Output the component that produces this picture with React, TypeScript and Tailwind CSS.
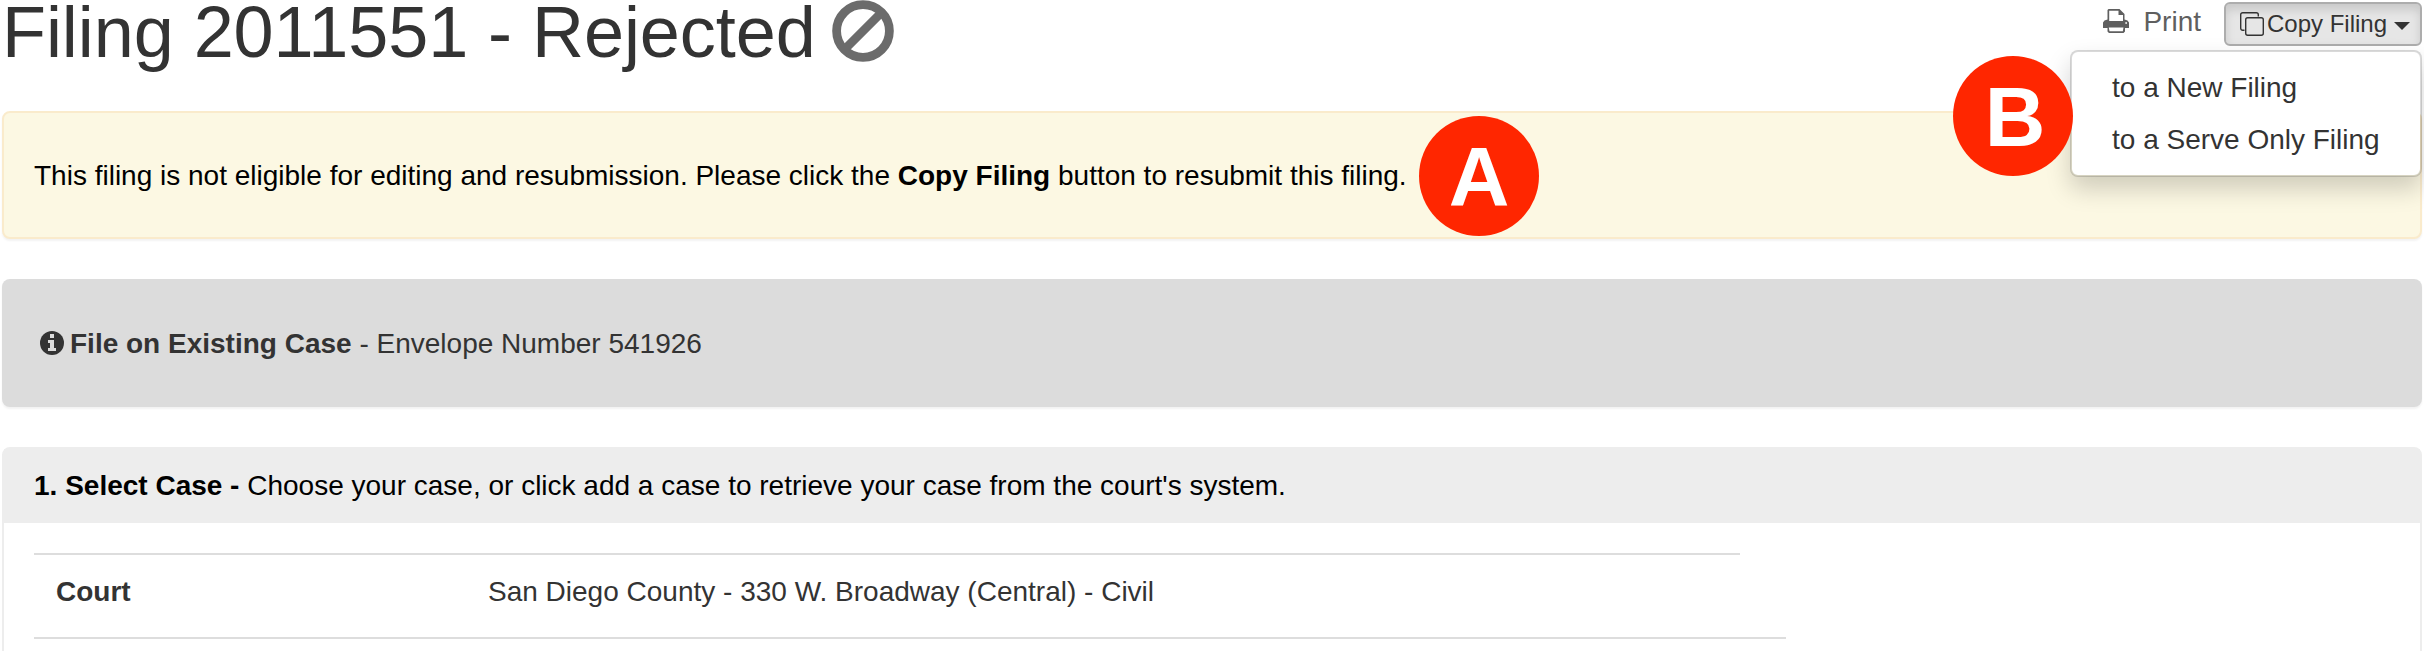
import { useState } from 'react'

const menuItems = ['to a New Filing', 'to a Serve Only Filing']

const BanIcon = () => (
  <svg className="w-[62px] h-[62px] text-[#6b6b6b]" viewBox="0 0 62 62" fill="none" stroke="currentColor" strokeWidth={8.8}>
    <circle cx="31" cy="31" r="26.4" />
    <path d="M14 48L48 14" />
  </svg>
)

const PrintIcon = () => (
  <svg className="w-[26px] h-6" viewBox="0 0 26 24" fill="currentColor">
    <path
      fillRule="evenodd"
      d="M5.500 0H16.500L21.500 5V10.500L24.500 11.500L26 13.500V19H22V22.500L20.500 24H6L4.500 22.500V19H0V13.500L1.500 11.500L4.500 10.500V1ZM6.200 1.700V12H20V6H15.500V1.700ZM5.800 18.500L6.500 22.300H19.800L20.500 18.500ZM22.300 13.300V14.800H24V13.300Z"
    />
  </svg>
)

const CopyIcon = () => (
  <svg className="w-6 h-6" viewBox="0 0 24 24" fill="none" stroke="currentColor" strokeWidth={1.4}>
    <rect x="5.7" y="5.7" width="17.6" height="17.6" rx="2" />
    <path d="M4.5 18.3H2.7a2 2 0 0 1-2-2V2.7a2 2 0 0 1 2-2h13.600a2 2 0 0 1 2 2v1.800" />
  </svg>
)

const InfoIcon = () => (
  <svg className="w-6 h-6" viewBox="0 0 24 24">
    <circle cx="12" cy="12" r="12" fill="#333" />
    <path fill="#dcdcdc" d="M10 3h4v4h-4zM8 9h6v8h2v3H8v-3h2v-5H8z" />
  </svg>
)

function Marker({ label, className }: { label: string; className: string }) {
  return (
    <span
      className={`absolute z-20 flex h-[120px] w-[120px] items-center justify-center rounded-full bg-[#ff2600] pt-0.5 text-[84px] font-bold leading-none text-white ${className}`}
    >
      {label}
    </span>
  )
}

export default function App() {
  const [isMenuOpen, setIsMenuOpen] = useState(true)

  return (
    <div className="h-[651px] overflow-hidden bg-white px-0.5 font-['Liberation_Sans',Arial,sans-serif] text-[28px] leading-10 text-[#333]">
      {/* Title bar */}
      <header className="flex h-[111px] items-start justify-between">
        <div className="flex items-start">
          <h1 className="text-[72px] leading-[64px] tracking-[-0.06px] whitespace-nowrap">Filing 2011551 - Rejected</h1>
          <span className="ml-4">
            <BanIcon />
          </span>
        </div>

        <div className="flex items-start">
          <a href="#" className="mr-[23px] flex items-center gap-[14px] pt-px text-[#5f5f5f]">
            <PrintIcon />
            <span className="pt-0.5 leading-[38px]">Print</span>
          </a>

          <div className="relative pt-0.5">
            <button
              onClick={() => setIsMenuOpen(!isMenuOpen)}
              className="flex h-11 w-[198px] items-center rounded-md border-2 border-[#adadad] bg-[#e6e6e6] pl-3.5 text-2xl shadow-[inset_0_6px_10px_rgba(0,0,0,0.125)]"
            >
              <CopyIcon />
              <span className="ml-[3px]">Copy Filing</span>
              <svg className="mt-1 ml-[7px] h-2 w-4" viewBox="0 0 16 8" fill="currentColor">
                <path d="M0 0h16l-8 8z" />
              </svg>
            </button>

            {isMenuOpen && (
              <ul className="absolute top-[50px] right-0 z-10 h-[127px] w-[352px] rounded-lg border-2 border-black/15 bg-white bg-clip-padding py-2.5 shadow-[0_12px_24px_rgba(0,0,0,0.175)]">
                {menuItems.map((item) => (
                  <li key={item} className="px-10 leading-[52px] whitespace-nowrap">
                    {item}
                  </li>
                ))}
              </ul>
            )}
            <Marker label="B" className="top-14 right-[349px] pl-1" />
          </div>
        </div>
      </header>

      {/* Rejection notice */}
      <div className="relative flex h-32 items-center rounded-lg border-2 border-[#faebcc] bg-[#fcf8e3] px-[30px] text-black shadow-[0_2px_2px_rgba(0,0,0,0.05)]">
        <p className="pt-0.5">
          This filing is not eligible for editing and resubmission. Please click the <b>Copy Filing</b> button to
          resubmit this filing.
        </p>
        <Marker label="A" className="top-[3px] left-[1415px]" />
      </div>

      {/* Envelope summary */}
      <div className="mt-10 flex h-32 items-center rounded-lg bg-[#dcdcdc] pl-[38px] shadow-[0_2px_2px_rgba(0,0,0,0.05)]">
        <InfoIcon />
        <p className="ml-1.5 pt-0.5">
          <b>File on Existing Case</b> - Envelope Number 541926
        </p>
      </div>

      {/* Case selection */}
      <section className="mt-10 h-[300px] rounded-lg border-2 border-[#ededed]">
        <h2 className="flex h-[74px] items-center bg-[#ededed] px-[30px] text-black">
          <span>
            <b>1. Select Case -</b> Choose your case, or click add a case to retrieve your case from the court's system.
          </span>
        </h2>
        <div className="px-[30px] pt-[30px]">
          <div className="w-[1706px] border-t-2 border-[#ddd]" />
          <dl className="flex h-[82px] items-center pl-[22px] pb-2">
            <dt className="w-[432px] font-bold">Court</dt>
            <dd>San Diego County - 330 W. Broadway (Central) - Civil</dd>
          </dl>
          <div className="w-[1752px] border-t-2 border-[#ddd]" />
        </div>
      </section>
    </div>
  )
}
